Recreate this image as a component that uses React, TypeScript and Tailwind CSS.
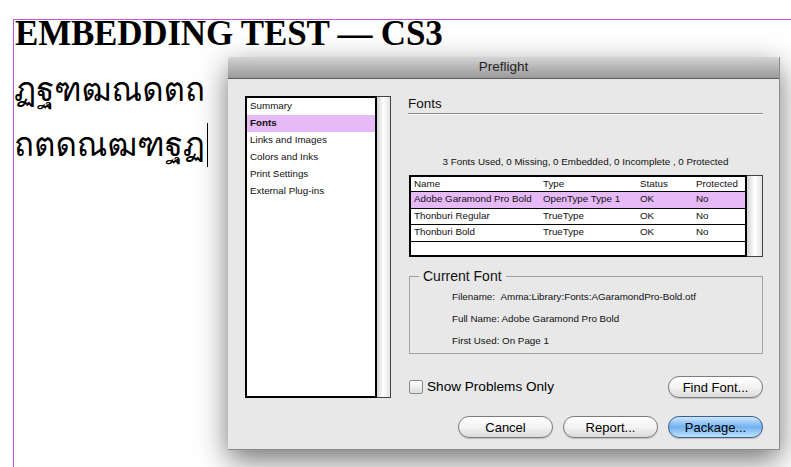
import clsx from "clsx";

const ui = "font-['Liberation_Sans',Arial,sans-serif]";

const sections = [
    "Summary",
    "Fonts",
    "Links and Images",
    "Colors and Inks",
    "Print Settings",
    "External Plug-ins",
];

const fonts = [
    { name: "Adobe Garamond Pro Bold", type: "OpenType Type 1", status: "OK", prot: "No" },
    { name: "Thonburi Regular", type: "TrueType", status: "OK", prot: "No" },
    { name: "Thonburi Bold", type: "TrueType", status: "OK", prot: "No" },
];

const cols = "grid grid-cols-[128px_97px_56px_1fr]";

const Pill = ({ label, primary }: { label: string; primary?: boolean }) => (
    <button
        className={clsx(
            "h-[22px] w-[95px] rounded-full border text-[13px] leading-none text-black shadow-[0_1px_1px_rgba(0,0,0,0.18)]",
            primary
                ? "border-[#3c5f92] bg-linear-to-b from-[#cfe7fd] via-[#6fb1f0] to-[#bfe2fd]"
                : "border-[#7c7c7c] bg-linear-to-b from-white via-[#f4f4f4] to-[#dadada]"
        )}
    >
        {label}
    </button>
);

const Scrollbar = () => (
    <div className="w-[14px] border-y border-r border-[#444] bg-linear-to-r from-[#d4d4d4] via-white to-[#e4e4e4]" />
);

const Preflight = () => {
    return (
        <div className={`absolute left-[228px] top-[57px] flex w-[552px] h-[393px] flex-col bg-[#e8e8e8] border-r border-b border-[#8a8a8a] shadow-[0_10px_28px_rgba(0,0,0,0.55)] ${ui}`}>
            {/* title bar */}
            <div className="flex h-[22px] items-center justify-center rounded-t-[3px] border-b border-[#5c5c5c] bg-linear-to-b from-[#d4d4d4] via-[#b6b6b6] to-[#9a9a9a] text-[13.5px] text-[#1e1e1e]">
                Preflight
            </div>

            <div className="flex gap-[17px] pl-[17px] pr-[16px] pt-[17px]">
                {/* section list */}
                <div className="flex h-[302px] w-[147px]">
                    <div className="flex-1 border-2 border-black bg-white text-[9.8px] text-[#111]">
                        {sections.map((s, idx) => (
                            <div
                                key={idx}
                                className={clsx(
                                    "flex h-[17px] items-center pl-[3px]",
                                    s === "Fonts" && "bg-[#e6b9f7] font-bold"
                                )}
                            >
                                {s}
                            </div>
                        ))}
                    </div>
                    <Scrollbar />
                </div>

                {/* right panel */}
                <div className="flex w-[355px] flex-col">
                    <div className="h-[18px] border-b border-[#8c8c8c] text-[13.5px] leading-[15px] text-[#111] shadow-[0_1px_0_#fafafa]">
                        Fonts
                    </div>

                    <div className="mt-[42px] h-[12px] text-center text-[9.8px] leading-[12px] text-[#111]">
                        3 Fonts Used, 0 Missing, 0 Embedded, 0 Incomplete , 0 Protected
                    </div>

                    <div className="ml-px mt-[7px] flex h-[82px]">
                        <div className="flex w-[338px] flex-col border-2 border-black bg-white text-[9.8px] text-[#111]">
                            <div className={`${cols} h-[15px] items-center border-b border-black`}>
                                <span className="pl-[3px]">Name</span>
                                <span className="pl-[4px]">Type</span>
                                <span className="pl-[4px]">Status</span>
                                <span className="pl-[4px]">Protected</span>
                            </div>
                            {fonts.map((f, idx) => (
                                <div
                                    key={idx}
                                    className={clsx(
                                        cols,
                                        "h-[16.5px] items-center border-b border-black",
                                        idx === 0 && "bg-[#e6b9f7]"
                                    )}
                                >
                                    <span className="pl-[3px]">{f.name}</span>
                                    <span className="pl-[4px]">{f.type}</span>
                                    <span className="pl-[4px]">{f.status}</span>
                                    <span className="pl-[4px]">{f.prot}</span>
                                </div>
                            ))}
                            <div className="flex-1" />
                        </div>
                        <div className="w-[16px] border-y border-r border-[#444] bg-linear-to-r from-[#d4d4d4] via-white to-[#e4e4e4]" />
                    </div>

                    <fieldset className="ml-px mt-[11px] w-[354px] border border-[#a2a2a2] pb-[6px]">
                        <legend className="ml-[9px] px-[4px] text-[14px] leading-[16px] text-[#111]">
                            Current Font
                        </legend>
                        <div className="mt-[7px] flex flex-col gap-[10px] pl-[42px] text-[9.8px] leading-[12px] text-[#111]">
                            <div>Filename:&nbsp;&nbsp;Amma:Library:Fonts:AGaramondPro-Bold.otf</div>
                            <div>Full Name: Adobe Garamond Pro Bold</div>
                            <div>First Used: On Page 1</div>
                        </div>
                    </fieldset>

                    <div className="mt-[22px] flex h-[22px] items-center justify-between">
                        <label className="flex items-center gap-[4px] text-[13.6px]">
                            <span className="ml-px h-[14px] w-[14px] rounded-[2px] border border-[#8a8a8a] bg-linear-to-b from-white to-[#dedede]" />
                            Show Problems Only
                        </label>
                        <Pill label="Find Font..." />
                    </div>
                </div>
            </div>

            <div className="mt-[18px] flex justify-end gap-[10px] pr-[16px]">
                <Pill label="Cancel" />
                <Pill label="Report..." />
                <Pill label="Package..." primary />
            </div>
        </div>
    );
};

const App = () => {
    return (
        <div className="relative h-[467px] w-full overflow-hidden bg-white">
            <div className="ml-[13px] mt-[19px] h-[448px] border-l border-t border-[#c05ad2]">
                <h1 className="pl-px pt-px text-[35px] font-bold leading-[25px] tracking-[-0.2px] text-black font-['Liberation_Serif','Times_New_Roman',serif]">
                    EMBEDDING TEST — CS3
                </h1>
                <div className="mt-[16px] text-[33px] leading-[55px] text-black font-['Loma','Garuda','Norasi','Noto_Serif_Thai','Noto_Sans_Thai',sans-serif]">
                    <div>ฏฐฑฒณดตถ</div>
                    <div className="flex items-center">
                        ถตดณฒฑฐฏ
                        <span className="ml-[2px] inline-block h-[44px] w-px bg-black" />
                    </div>
                </div>
            </div>
            <Preflight />
        </div>
    );
};

export default App;
